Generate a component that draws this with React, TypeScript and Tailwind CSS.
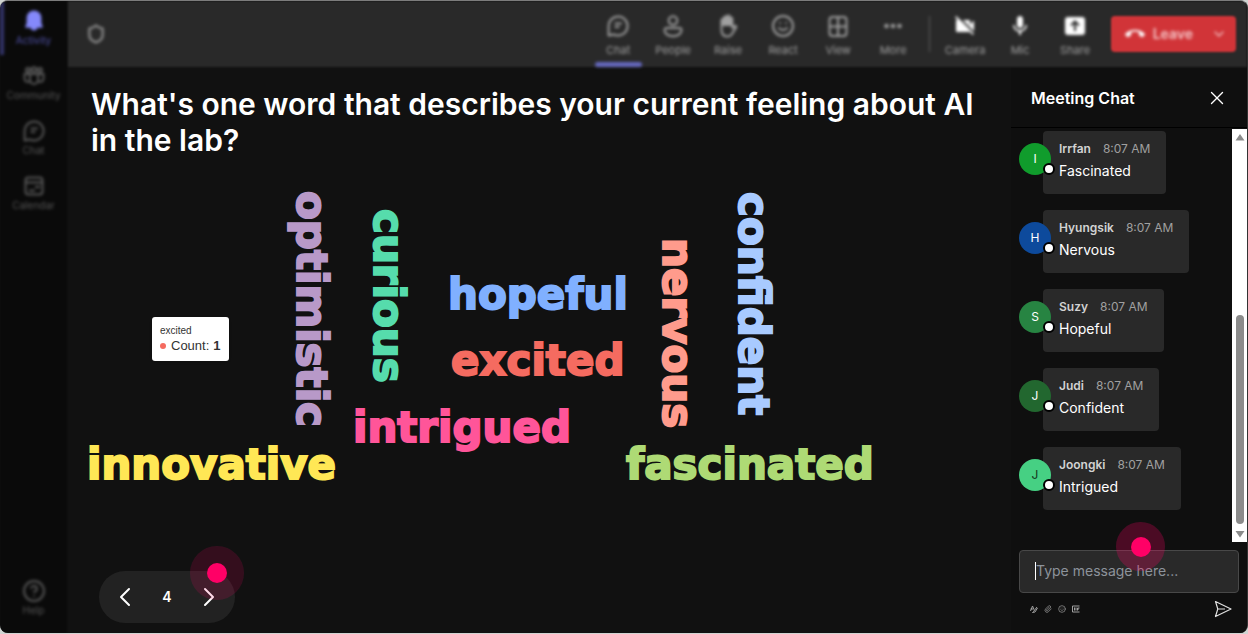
import { ReactNode } from "react"
import { ChevronDown, ChevronLeft, ChevronRight, CircleHelp, Paperclip, Shield, Smile, X } from "lucide-react"
import { MdCallEnd, MdMic, MdVideocamOff } from "react-icons/md"

type Item = {
  label: string
  icon: ReactNode
  active?: boolean
}

type Message = {
  name: string
  time: string
  text: string
  color: string
}

type Word = {
  text: string
  x: number
  y: number
  color: string
  vertical?: boolean
}

const BellIcon = () => (
  <svg viewBox="0 0 24 24" className="w-6 h-6" fill="currentColor">
    <path d="M12 1.5a7.4 7.4 0 0 0-7.4 7.2v5.2l-1.3 3.6c-.2.7.2 1.3.9 1.3h4.300a3.600 3.600 0 0 0 7 0h4.300c.7 0 1.100-.6.900-1.300l-1.300-3.600V8.700A7.400 7.400 0 0 0 12 1.500z" />
  </svg>
)

const CommunityIcon = () => (
  <svg viewBox="0 0 24 24" className="w-6 h-6" fill="none" stroke="currentColor" strokeWidth="2">
    <circle cx="6" cy="6" r="2" />
    <circle cx="12" cy="5.5" r="2.300" />
    <circle cx="18" cy="6" r="2" />
    <path d="M8 10h8v6a4 4 0 0 1-8 0zM8 10H2.500v4.500c0 2.600 2.500 4 5.200 3M16 10h5.500v4.500c0 2.600-2.500 4-5.200 3" />
  </svg>
)

const ChatIcon = () => (
  <svg viewBox="0 0 24 24" className="w-6 h-6" fill="none" stroke="currentColor" strokeWidth="2" strokeLinejoin="round">
    <path d="M12 2.500a9.500 9.500 0 1 1-4.400 17.900L2.600 21.500V12A9.500 9.500 0 0 1 12 2.500z" />
    <path d="M9.500 9.500H15M9.500 13h3" strokeLinecap="round" />
  </svg>
)

const CalendarIcon = () => (
  <svg viewBox="0 0 24 24" className="w-6 h-6" fill="none" stroke="currentColor" strokeWidth="2">
    <rect x="3.500" y="3.500" width="17" height="17" rx="3" />
    <path d="M3.500 8.500h17M13 13h5M7 16.500h6" />
  </svg>
)

const PeopleIcon = () => (
  <svg viewBox="0 0 24 24" className="w-6 h-6" fill="none" stroke="currentColor" strokeWidth="2">
    <circle cx="12" cy="6.500" r="4.300" />
    <path d="M5.500 14h13a2 2 0 0 1 2 2c0 4-4 6.200-8.500 6.200S3.500 20 3.500 16a2 2 0 0 1 2-2z" />
  </svg>
)

const HandIcon = () => (
  <svg viewBox="0 0 24 24" className="w-6 h-6" fill="none" stroke="currentColor" strokeWidth="2" strokeLinecap="round" strokeLinejoin="round">
    <path d="M6 6h10v5H6zM8 4h6" fill="currentColor" />
    <path d="M5.500 11V6.200a1.300 1.300 0 0 1 2.600 0V10 3.800a1.400 1.400 0 0 1 2.800 0V10 2.800a1.400 1.400 0 0 1 2.800 0V10 4.800a1.300 1.300 0 0 1 2.600 0V14l2.200-2c1-.8 2.300.3 1.600 1.400l-3.800 6c-1.200 2-2.600 3-4.800 3-4 0-6-2.800-6-6.400z" />
  </svg>
)

const ViewIcon = () => (
  <svg viewBox="0 0 24 24" className="w-6 h-6" fill="none" stroke="currentColor" strokeWidth="2">
    <rect x="3.500" y="3" width="17" height="19" rx="3" />
    <path d="M12 3v19M3.500 12.500h17" />
  </svg>
)

const MoreIcon = () => (
  <svg viewBox="0 0 24 24" className="w-6 h-6" fill="currentColor">
    <circle cx="5.500" cy="12" r="2.300" />
    <circle cx="12" cy="12" r="2.300" />
    <circle cx="18.500" cy="12" r="2.300" />
  </svg>
)

const ShareIcon = () => (
  <svg viewBox="0 0 24 24" className="w-6 h-6">
    <rect x="2" y="3" width="20" height="18" rx="3" fill="currentColor" />
    <path d="M12 17V8M8 11.500L12 7.500l4 4" fill="none" stroke="#292929" strokeWidth="2" />
  </svg>
)

const FormatIcon = () => (
  <svg viewBox="0 0 16 16" className="w-2 h-2" fill="none" stroke="currentColor" strokeWidth="2">
    <path d="M1 12L5 2l3 7M1 8h6M14 4L7 13l-2 2 5-1 5-8" />
  </svg>
)

const GifIcon = () => (
  <svg viewBox="0 0 16 16" className="w-2 h-2" fill="none" stroke="currentColor" strokeWidth="2">
    <path d="M15 2H1v12h14M5 5v6M8 5v6M11 11V6h4M11 8h3" />
  </svg>
)

const SendIcon = () => (
  <svg viewBox="0 0 18 18" className="w-[18px] h-[18px]" fill="none" stroke="currentColor" strokeWidth="1.200" strokeLinejoin="round">
    <path d="M1.500 1.500L17 9 1.500 16.500 3.800 9zM3.800 9H11" />
  </svg>
)

const navItems: Item[] = [
  { label: "Activity", icon: <BellIcon />, active: true },
  { label: "Community", icon: <CommunityIcon /> },
  { label: "Chat", icon: <ChatIcon /> },
  { label: "Calendar", icon: <CalendarIcon /> },
]

const tools: Item[] = [
  { label: "Chat", icon: <ChatIcon />, active: true },
  { label: "People", icon: <PeopleIcon /> },
  { label: "Raise", icon: <HandIcon /> },
  { label: "React", icon: <Smile className="w-6 h-6" /> },
  { label: "View", icon: <ViewIcon /> },
  { label: "More", icon: <MoreIcon /> },
]

const devices: Item[] = [
  { label: "Camera", icon: <MdVideocamOff className="w-6 h-6" /> },
  { label: "Mic", icon: <MdMic className="w-6 h-6" /> },
  { label: "Share", icon: <ShareIcon /> },
]

const words: Word[] = [
  { text: "optimistic", x: 229, y: 33, color: "#b899c8", vertical: true },
  { text: "curious", x: 306, y: 51, color: "#56dcac", vertical: true },
  { text: "hopeful", x: 380, y: 151, color: "#80b0ff" },
  { text: "excited", x: 383, y: 217, color: "#f56b60" },
  { text: "intrigued", x: 285, y: 284, color: "#ff5599" },
  { text: "nervous", x: 595, y: 80, color: "#ff9b8c", vertical: true },
  { text: "confident", x: 671, y: 34, color: "#a8caff", vertical: true },
  { text: "innovative", x: 19, y: 321, color: "#ffe755" },
  { text: "fascinated", x: 558, y: 321, color: "#aeda75" },
]

const messages: Message[] = [
  { name: "Irrfan", time: "8:07 AM", text: "Fascinated", color: "bg-[#109c2c] text-white" },
  { name: "Hyungsik", time: "8:07 AM", text: "Nervous", color: "bg-[#0d4a9c] text-white" },
  { name: "Suzy", time: "8:07 AM", text: "Hopeful", color: "bg-[#278442] text-white" },
  { name: "Judi", time: "8:07 AM", text: "Confident", color: "bg-[#22672f] text-white" },
  { name: "Joongki", time: "8:07 AM", text: "Intrigued", color: "bg-[#46d083] text-[#14381f]" },
]

function NavButton({ item }: { item: Item }) {
  return (
    <button
      className={`flex w-full flex-col items-center border-l-4 py-2 pr-1 ${
        item.active ? "border-[#33346a] text-[#8589fa]" : "border-transparent text-[#585858]"
      }`}
    >
      {item.icon}
      <span className={`text-[10px] leading-[14px] ${item.active ? "text-[#5052a8]" : ""}`}>{item.label}</span>
    </button>
  )
}

function ToolButton({ item, bright }: { item: Item; bright?: boolean }) {
  return (
    <button className="flex h-full w-[55px] flex-col items-center justify-between px-1 pt-[13px] text-[#a0a0a0]">
      <span className={bright ? "text-white" : ""}>{item.icon}</span>
      <span className="text-[11px] leading-[14px]">{item.label}</span>
      <span className={`h-[5px] w-full rounded-sm ${item.active ? "bg-[#6669c0]" : ""}`} />
    </button>
  )
}

function Sidebar() {
  return (
    <nav className="flex w-[67px] shrink-0 flex-col justify-between bg-[#0a0a0a] pb-2 blur-[1px]">
      <div className="flex flex-col gap-px blur-[1px]">
        {navItems.map((item) => (
          <NavButton key={item.label} item={item} />
        ))}
      </div>
      <div className="blur-[1px]">
        <NavButton item={{ label: "Help", icon: <CircleHelp className="w-6 h-6" /> }} />
      </div>
    </nav>
  )
}

function Toolbar() {
  return (
    <header className="flex h-[66px] shrink-0 items-center bg-[#292929] pl-[18px] pr-[11px] blur-[1px]">
      <Shield className="w-5 h-5 text-[#858585] blur-[1px]" strokeWidth={3} />
      <div className="ml-auto flex h-full items-center blur-[1px]">
        {tools.map((item) => (
          <ToolButton key={item.label} item={item} />
        ))}
        <div className="mx-2 h-9 w-px bg-[#606060]" />
        {devices.map((item) => (
          <ToolButton key={item.label} item={item} bright />
        ))}
      </div>
      <div className="ml-2 flex h-9 items-center rounded bg-[#d13438] text-[#f5c8ca]">
        <button className="flex items-center gap-2 pl-[14px] text-sm font-semibold blur-[1px]">
          <MdCallEnd className="w-5 h-5 text-white" />
          Leave
        </button>
        <button aria-label="Leave options" className="pl-[18px] pr-[9px] blur-[1px]">
          <ChevronDown className="w-4 h-4" />
        </button>
      </div>
    </header>
  )
}

function Hotspot({ className }: { className: string }) {
  return (
    <span className={`pointer-events-none absolute flex items-center justify-center rounded-full ${className}`}>
      <span className="h-5 w-5 rounded-full bg-[#ff0066]" />
    </span>
  )
}

function WordCloud() {
  return (
    <div className="relative flex-1">
      <svg className="h-full w-full overflow-visible font-['DejaVu_Sans',sans-serif] text-[42px] font-bold">
        {words.map((word) => (
          <text
            key={word.text}
            fill={word.color}
            stroke={word.color}
            strokeWidth={2}
            transform={`translate(${word.x} ${word.y})${word.vertical ? " rotate(90)" : ""}`}
          >
            {word.text}
          </text>
        ))}
      </svg>
      <div className="absolute left-[84px] top-[159px] rounded-[3px] bg-white px-2 py-[7px] font-['Liberation_Sans',sans-serif] text-[#333] shadow">
        <p className="text-[10px] leading-[14px]">excited</p>
        <p className="flex items-center gap-1 text-[13px] leading-4">
          <span className="mr-px h-[6px] w-[6px] rounded-full bg-[#f56b60]" />
          Count: <b>1</b>
        </p>
      </div>
    </div>
  )
}

function ChatMessage({ message }: { message: Message }) {
  return (
    <li className="flex">
      <div className="relative mt-3 h-8 w-8 shrink-0">
        <span className={`flex h-8 w-8 items-center justify-center rounded-full text-xs ${message.color}`}>
          {message.name[0]}
        </span>
        <span className="absolute bottom-0 -right-1 h-3 w-3 rounded-full border-2 border-black bg-white" />
      </div>
      <div className="-ml-2 h-[63px] rounded bg-[#292929] px-4 pt-2">
        <p className="flex gap-3 text-xs leading-5">
          <span className="font-semibold text-[#d2d2d2]">{message.name}</span>
          <span className="text-[#a0a0a0]">{message.time}</span>
        </p>
        <p className="text-sm leading-6 text-white">{message.text}</p>
      </div>
    </li>
  )
}

function ChatPanel() {
  return (
    <aside className="flex w-[236px] shrink-0 flex-col bg-[#0f0f0f]">
      <div className="flex h-[61px] items-center justify-between border-b border-black pl-5 pr-[19px] pt-[2px]">
        <h2 className="text-base font-semibold text-white">Meeting Chat</h2>
        <button aria-label="Close chat" className="text-white">
          <X className="w-[22px] h-[22px]" strokeWidth={1.5} />
        </button>
      </div>
      <div className="flex justify-between">
        <ul className="flex flex-col gap-4 pl-2 pt-[3px]">
          {messages.map((message) => (
            <ChatMessage key={message.name} message={message} />
          ))}
        </ul>
        <div className="mt-px flex h-[413px] w-[15px] flex-col items-center justify-between bg-white py-1 text-[#8b8b8b]">
          <svg viewBox="0 0 10 8" className="h-2 w-[10px]" fill="currentColor">
            <path d="M5 1L9.500 7.500H.500z" />
          </svg>
          <div className="mb-[6px] mt-auto h-[209px] w-2 rounded-full bg-[#8b8b8b]" />
          <svg viewBox="0 0 10 8" className="h-2 w-[10px]" fill="currentColor">
            <path d="M5 7.500L9.500 1H.500z" />
          </svg>
        </div>
      </div>
      <form className="mt-2 px-2">
        <div className="relative">
          <input
            aria-label="Message"
            placeholder="Type message here..."
            className="h-[43px] w-full rounded border border-[#484848] bg-[#292929] px-4 pb-[3px] text-sm text-white outline-none placeholder:text-[#8d939b]"
          />
          <span className="absolute left-4 top-3 h-[18px] w-px bg-white" />
          <Hotspot className="left-[97px] -top-7 h-[49px] w-[49px] bg-[#ff0066]/25" />
        </div>
        <div className="flex items-center justify-between pl-[11px] pr-[7px] pt-[7px] text-[#a0a0a0]">
          <div className="flex gap-[6px]">
            <button type="button" aria-label="Format"><FormatIcon /></button>
            <button type="button" aria-label="Attach"><Paperclip className="w-2 h-2" /></button>
            <button type="button" aria-label="Emoji"><Smile className="w-2 h-2" /></button>
            <button type="button" aria-label="GIF"><GifIcon /></button>
          </div>
          <button type="button" aria-label="Send" className="text-[#e0e0e0]">
            <SendIcon />
          </button>
        </div>
      </form>
    </aside>
  )
}

export default function App() {
  return (
    <div className="min-h-screen bg-[#d0d4d2] pb-px font-['Inter',sans-serif]">
      <div className="flex min-h-[calc(100vh-1px)] overflow-hidden rounded-lg border-r border-t border-r-[#333] border-t-[#7c7c7c] bg-[#111]">
        <Sidebar />
        <div className="ml-px flex min-w-0 flex-1 flex-col">
          <Toolbar />
          <div className="flex flex-1">
            <main className="flex min-w-0 flex-1 flex-col">
              <h1 className="pl-[23px] pr-8 pt-[19px] text-3xl/9 font-semibold text-white">
                What's one word that describes your current feeling about AI in the lab?
              </h1>
              <WordCloud />
              <div className="relative mb-[10px] ml-[31px] flex h-[52px] w-[136px] items-center justify-between rounded-[26px] bg-[#222] px-[10px] text-white">
                <button aria-label="Previous">
                  <ChevronLeft className="w-8 h-8" strokeWidth={1.5} />
                </button>
                <span className="text-sm font-semibold">4</span>
                <button aria-label="Next">
                  <ChevronRight className="w-8 h-8" strokeWidth={1.5} />
                </button>
                <Hotspot className="left-[91px] -top-[25px] h-[54px] w-[54px] bg-[#ff0066]/15" />
              </div>
            </main>
            <ChatPanel />
          </div>
        </div>
      </div>
    </div>
  )
}
